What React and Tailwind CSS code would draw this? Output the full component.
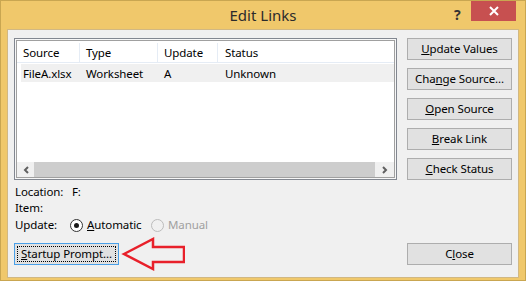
import React from "react";

const ui = "font-['Segoe_UI','Noto_Sans',sans-serif]";

function DlgButton({ children, className = "" }) {
  return (
    <button
      className={`h-[22px] w-[105px] border border-[#adadad] bg-[#e1e1e1] text-[11.5px] leading-none text-black flex items-center justify-center ${className}`}
    >
      {children}
    </button>
  );
}

function Radio({ checked, disabled }) {
  return (
    <span
      className={`w-[13px] h-[13px] rounded-full border flex items-center justify-center ${
        disabled ? "border-[#bcbcbc] bg-[#f0f0f0]" : "border-[#333333] bg-white"
      }`}
    >
      {checked && <span className="w-[5px] h-[5px] rounded-full bg-[#1a1a1a]" />}
    </span>
  );
}

export default function App() {
  return (
    <div className={`w-[526px] h-[281px] bg-[#f0c86b] border border-[#c9a651] flex flex-col ${ui}`}>

      {/* TITLE BAR */}
      <div className="h-[28px] relative flex items-center justify-center">
        <span className="text-[15px] text-[#2b2b2b]">Edit Links</span>
        <span className="absolute left-[453px] top-[3px] text-[14px] font-bold text-[#333333]">?</span>
        <div className="absolute left-[470px] top-0 w-[45px] h-[20px] bg-[#c75050] flex items-center justify-center">
          <svg width="10" height="10" viewBox="0 0 10 10">
            <path d="M1 1 L9 9 M9 1 L1 9" stroke="white" strokeWidth="2" />
          </svg>
        </div>
      </div>

      {/* CLIENT */}
      <div className="mx-[6px] mb-[2px] flex-1 border border-[#d1b883] bg-[#f0f0f0] flex flex-col px-[6px] pt-[8px] text-[11.5px] tracking-[-0.1px] text-black">

        {/* LIST + BUTTONS */}
        <div className="flex gap-[10px]">
          <div className="w-[383px] h-[142px] border border-[#828790] p-px bg-[#f7f7f7]">
            <div className="w-full h-full border border-[#a0a0a0] bg-white flex flex-col">
              {/* header */}
              <div className="h-[22px] flex border-b border-[#e5ecf5] shrink-0 pt-[2px]">
                <div className="w-[63px] border-r border-[#e5ecf5] pl-[6px] flex items-center">Source</div>
                <div className="w-[78px] border-r border-[#e5ecf5] pl-[6px] flex items-center">Type</div>
                <div className="w-[60px] border-r border-[#e5ecf5] pl-[6px] flex items-center">Update</div>
                <div className="flex-1 pl-[7px] flex items-center">Status</div>
              </div>
              {/* row */}
              <div className="h-[18px] mt-px ml-[4px] bg-[#f0f0f0] flex items-center pt-[2px]">
                <div className="w-[59px] pl-[2px]">FileA.xlsx</div>
                <div className="w-[78px] pl-[6px]">Worksheet</div>
                <div className="w-[60px] pl-[6px]">A</div>
                <div className="flex-1 pl-[7px]">Unknown</div>
              </div>
              <div className="flex-1" />
              {/* scrollbar */}
              <div className="h-[15px] flex bg-[#f0f0f0]">
                <div className="w-[17px] flex items-center justify-center">
                  <svg width="6" height="8" viewBox="0 0 6 8">
                    <path d="M5 1 L2 4 L5 7" stroke="#606060" strokeWidth="2" fill="none" />
                  </svg>
                </div>
                <div className="flex-1 bg-[#cdcdcd]" />
                <div className="w-[19px] flex items-center justify-center">
                  <svg width="6" height="8" viewBox="0 0 6 8">
                    <path d="M1 1 L4 4 L1 7" stroke="#606060" strokeWidth="2" fill="none" />
                  </svg>
                </div>
              </div>
            </div>
          </div>

          <div className="flex flex-col gap-[8px]">
            <DlgButton><span><u>U</u>pdate Values</span></DlgButton>
            <DlgButton><span>Cha<u>n</u>ge Source...</span></DlgButton>
            <DlgButton><span><u>O</u>pen Source</span></DlgButton>
            <DlgButton><span><u>B</u>reak Link</span></DlgButton>
            <DlgButton><span><u>C</u>heck Status</span></DlgButton>
          </div>
        </div>

        {/* INFO */}
        <div className="mt-[4px] pl-[1px] flex flex-col">
          <div className="h-[16px] flex items-center">
            <span className="w-[57px]">Location:</span>
            <span>F:</span>
          </div>
          <div className="h-[16px] flex items-center">Item:</div>
          <div className="h-[18px] flex items-center">
            <span className="w-[55px]">Update:</span>
            <Radio checked />
            <span className="ml-[4px] w-[64px]"><u>A</u>utomatic</span>
            <Radio disabled />
            <span className="ml-[4px] text-[#a0a0a0]">Manual</span>
          </div>
        </div>

        {/* BOTTOM */}
        <div className="mt-auto mb-[12px] h-[22px] flex items-center">
          <button className="h-[22px] w-[105px] border border-[#4aa0e8] bg-[#e1e1e1] p-[2px]">
            <span className="w-full h-full border border-dotted border-black flex items-center justify-center leading-none">
              <span><u>S</u>tartup Prompt...</span>
            </span>
          </button>
          <svg width="64" height="34" viewBox="0 0 64 34" className="ml-[2px] -my-[6px]">
            <path
              d="M3 17 L32 2 L32 10 L63 10 L63 25 L32 25 L32 32 Z"
              stroke="#e8202a"
              strokeWidth="2.5"
              fill="none"
              strokeLinejoin="miter"
            />
          </svg>
          <div className="flex-1" />
          <DlgButton><span>C<u>l</u>ose</span></DlgButton>
        </div>
      </div>
    </div>
  );
}
